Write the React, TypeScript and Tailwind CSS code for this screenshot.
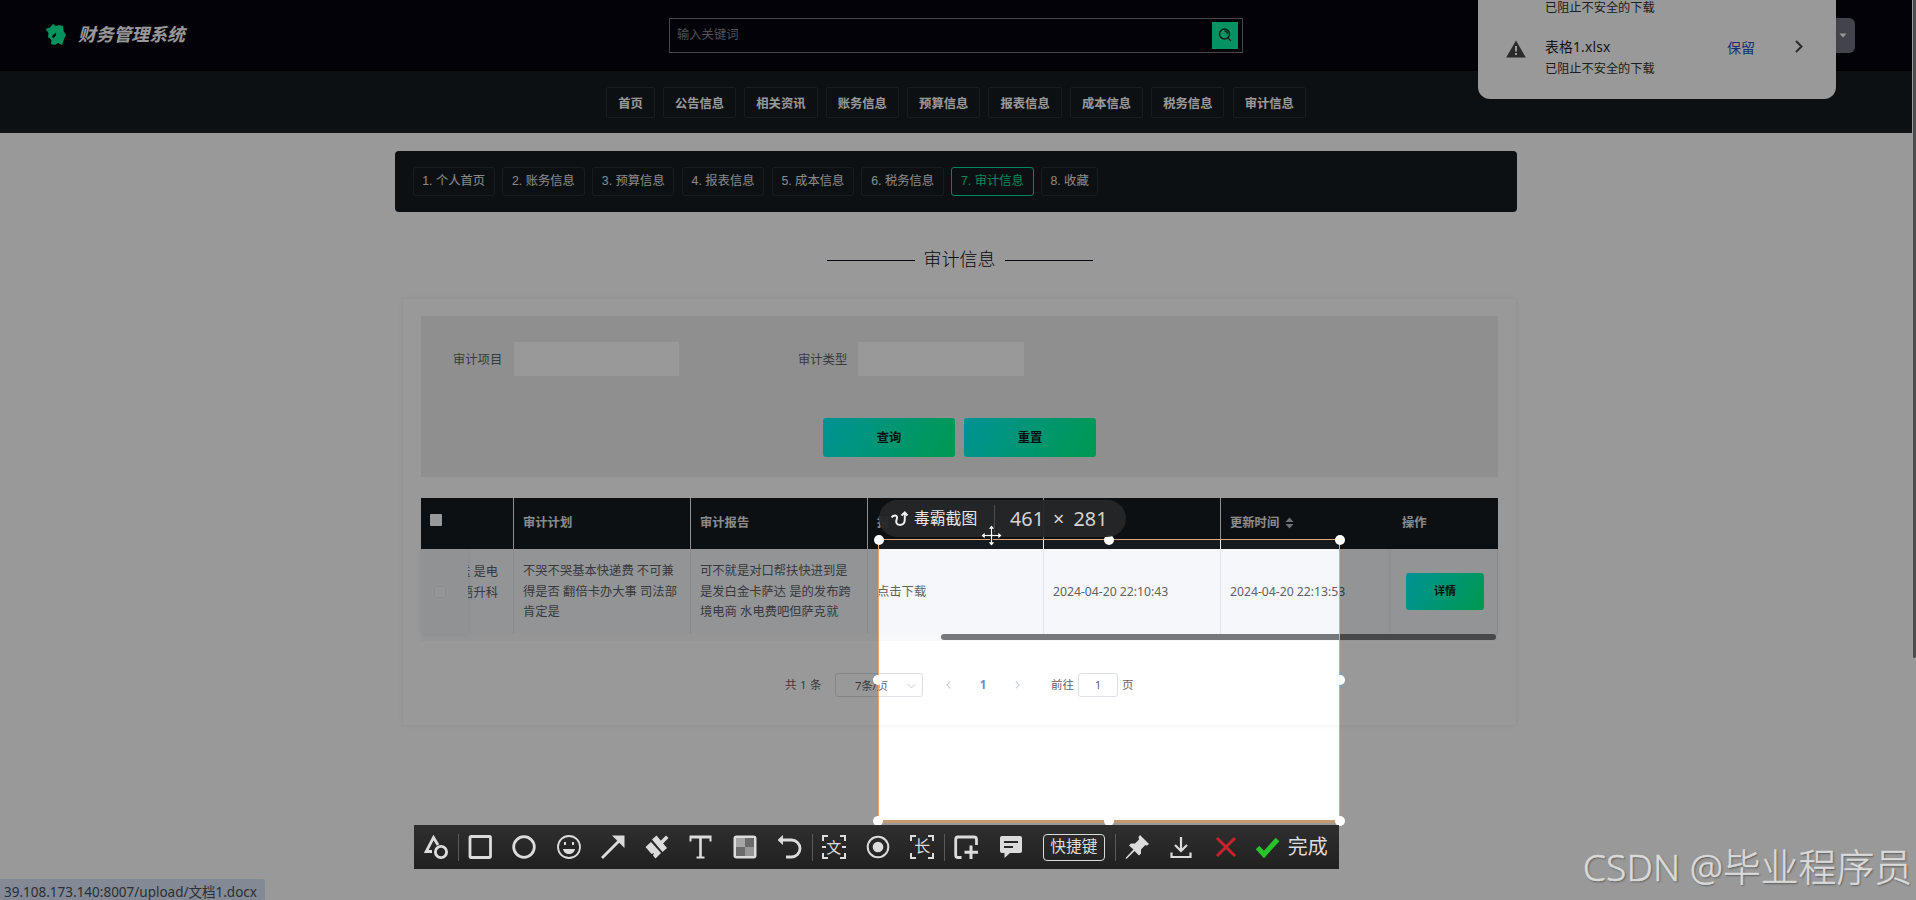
import React from "react";

const NAV = ["首页", "公告信息", "相关资讯", "账务信息", "预算信息", "报表信息", "成本信息", "税务信息", "审计信息"];
const TABS = ["个人首页", "账务信息", "预算信息", "报表信息", "成本信息", "税务信息", "审计信息", "收藏"];

const Header = () => (
    <header className="flex h-[70px] items-center bg-[#060410] pl-[44px]">
        <svg className="-mt-[2px]" width="23" height="23" viewBox="0 0 23 23" fill="#00f5a0">
            <path d="M9 1l3 2 3-1 4 1 .5 5L22 12l-2 4-2 6-4-2-3 2-4-1 .5-4L4 14l.5-4L1.500 6 6 4.500z" />
            <path d="M8 13l4-3.500v3L9 15.500z" fill="#060410" />
        </svg>
        <h1 className="ml-[11px] w-[591px] pt-px text-[17.8px] font-bold italic text-white">财务管理系统</h1>
        <div className="flex h-[35px] w-[574px] items-center justify-between border border-[#77777c] pr-[4px] pl-[7px]">
            <span className="pt-px text-[12.3px] text-[#85858a]">输入关键词</span>
            <button className="flex h-[27px] w-[26px] items-center justify-center bg-[#06f3a3]">
                <svg width="14" height="14" viewBox="0 0 14 14" fill="none" stroke="#08352b" strokeWidth="1.4">
                    <circle cx="6.5" cy="6" r="5" />
                    <path d="M10 10l3 3M6.5 3a3 3 0 0 1 3 3" />
                </svg>
            </button>
        </div>
    </header>
);

const NavBar = () => (
    <nav className="flex h-[63px] justify-center gap-[8.2px] border-t border-b-4 border-t-black border-b-[#1e2228] bg-[#161b20] pt-[16px]">
        {NAV.map((n) => (
            <a
                key={n}
                className="flex h-[31px] items-center rounded-[2px] border border-[#2a2f35] px-[11px] pt-[3px] text-[12.3px] font-bold text-white"
            >
                {n}
            </a>
        ))}
    </nav>
);

const SubNav = () => (
    <div className="mt-[18px] flex h-[61px] items-center gap-[7.5px] rounded-[4px] bg-[#161b20] pl-[17.5px]">
        {TABS.map((t, i) => (
            <a
                key={t}
                className={
                    i === 6
                        ? "flex h-[29px] w-[82.3px] items-center justify-center rounded-[3px] border border-[#06e098] text-[12.3px] whitespace-pre text-[#06e098]"
                        : i === 7
                          ? "flex h-[29px] w-[57px] items-center justify-center rounded-[3px] border border-[#2a2f35] text-[12.3px] whitespace-pre text-[#e4e4e4]"
                          : "flex h-[29px] w-[82.3px] items-center justify-center rounded-[3px] border border-[#2a2f35] text-[12.3px] whitespace-pre text-[#e4e4e4]"
                }
            >
                {i + 1}. {t}
            </a>
        ))}
    </div>
);

const SearchPanel = () => (
    <div className="h-[161px] bg-[#eeeeee] pt-[26px]">
        <div className="flex pl-[32px]">
            <div className="flex w-[345px] items-center">
                <label className="w-[60.5px] pt-[2px] text-[12.3px] text-[#606266]">审计项目</label>
                <div className="h-[34px] w-[165px] bg-white" />
            </div>
            <div className="flex items-center">
                <label className="w-[60px] pt-[2px] text-[12.3px] text-[#606266]">审计类型</label>
                <div className="h-[34px] w-[166px] bg-white" />
            </div>
        </div>
        <div className="mt-[42px] flex justify-center gap-[9px]">
            <button className="h-[39px] w-[132px] rounded-[3px] bg-[linear-gradient(120deg,#00f5fa,#00ff85)] pt-[2px] text-[12.3px] font-bold text-[#101820]">
                查询
            </button>
            <button className="h-[39px] w-[132px] rounded-[3px] bg-[linear-gradient(120deg,#00f5fa,#00ff85)] pt-[2px] text-[12.3px] font-bold text-[#101820]">
                重置
            </button>
        </div>
    </div>
);

const HeadCell = ({ children }: { children?: React.ReactNode }) => (
    <div className="flex items-center border-r border-[#ebeef5] pl-[9px]">{children}</div>
);

const BodyCell = ({ children }: { children?: React.ReactNode }) => (
    <div className="flex items-center border-r border-[#e2e5ec] pt-[1px] pl-[9px] whitespace-nowrap">{children}</div>
);

const Table = () => (
    <div className="mt-[21px] w-[1077px]">
        <div className="grid h-[51px] grid-cols-[93px_177px_177px_176px_177px_170px_107px] bg-[#161b20] text-[12.3px] font-bold text-[#e8e8e8]">
            <div className="border-r border-[#ebeef5] pt-[16px] pl-[9px]">
                <div className="h-[12px] w-[12px] rounded-[1px] bg-white" />
            </div>
            <HeadCell>审计计划</HeadCell>
            <HeadCell>审计报告</HeadCell>
            <HeadCell>报</HeadCell>
            <HeadCell />
            <div className="flex items-center pb-[1px] pl-[9px]">
                更新时间
                <svg className="ml-[6px]" width="9" height="12" viewBox="0 0 9 12" fill="#b8bcc4">
                    <path d="M4.5 0.5L8.5 5h-8zM4.5 11.5L8.5 7h-8z" />
                </svg>
            </div>
            <div className="flex items-center pl-[11px]">操作</div>
        </div>
        <div className="grid h-[85px] grid-cols-[93px_177px_177px_176px_177px_170px_107px] bg-[#f5f7fa] font-['Noto_Sans','Noto_Sans_CJK_SC',sans-serif] text-[12.3px] leading-[20.5px] text-[#606266]">
            <div className="flex border-r border-[#e2e5ec]">
                <div className="flex w-[47px] items-center bg-[#f2f4f7] pl-[13px] shadow-[0_0_6px_rgba(0,0,0,0.09)]">
                    <div className="h-[12px] w-[12px] border border-[#e6e9ee] bg-[#fbfbfc]" />
                </div>
                <div className="flex w-[30px] justify-end overflow-hidden pt-[13px] text-right whitespace-nowrap">
                    <p>
                        送 是电
                        <br />
                        语升科
                    </p>
                </div>
            </div>
            <BodyCell>
                <p>
                    不哭不哭基本快递费 不可兼
                    <br />
                    得是否 翻倍卡办大事 司法部
                    <br />
                    肯定是
                </p>
            </BodyCell>
            <BodyCell>
                <p>
                    可不就是对口帮扶快进到是
                    <br />
                    是发白金卡萨达 是的发布跨
                    <br />
                    境电商 水电费吧但萨克就
                </p>
            </BodyCell>
            <BodyCell>点击下载</BodyCell>
            <BodyCell>
                <span className="text-[12.2px]">2024-04-20 22:10:43</span>
            </BodyCell>
            <div className="flex items-center pt-[1px] pl-[9px] text-[12.2px] whitespace-nowrap">2024-04-20 22:13:53</div>
            <div className="flex items-center border-r border-[#e2e5ec] bg-[#f5f7fa] pl-[15px] shadow-[-2px_0_5px_rgba(0,0,0,0.05)]">
                <button className="h-[37px] w-[78px] rounded-[3px] bg-[linear-gradient(120deg,#00f5fa,#00ff85)] text-[11px] font-bold text-[#101820]">
                    详情
                </button>
            </div>
        </div>
        <div className="flex h-[7px] justify-end bg-[#f8f9fb] pr-[2px]">
            <div className="h-[6px] w-[555px] rounded-full bg-[#77787b]" />
        </div>
    </div>
);

const Pager = () => (
    <div className="mt-[32px] flex h-[24px] items-center pl-[364px] font-['Noto_Sans','Noto_Sans_CJK_SC',sans-serif] text-[11.5px] text-[#606266]">
        <span className="w-[50px] [word-spacing:0.5px]">共 1 条</span>
        <div className="flex h-[24px] w-[88px] items-center justify-between rounded-[3px] border border-[#dcdfe6] pt-[1px] pr-[6px] pl-[19px]">
            <span className="tracking-[-0.3px]">7条/页</span>
            <svg width="9" height="6" viewBox="0 0 9 6" fill="none" stroke="#c8ccd3">
                <path d="M0.5 1l4 4 4-4" />
            </svg>
        </div>
        <svg className="ml-[23px]" width="5" height="8" viewBox="0 0 6 9" fill="none" stroke="#c8ccd3" strokeWidth="1.3">
            <path d="M5 0.5l-4 4 4 4" />
        </svg>
        <span className="w-[64px] text-center font-bold text-[#5b8edb]">1</span>
        <svg width="5" height="8" viewBox="0 0 6 9" fill="none" stroke="#c8ccd3" strokeWidth="1.3">
            <path d="M1 0.5l4 4-4 4" />
        </svg>
        <span className="ml-[31px]">前往</span>
        <div className="mx-[4px] flex h-[24px] w-[40px] items-center justify-center rounded-[3px] border border-[#dcdfe6]">1</div>
        页
    </div>
);

const DownloadPopup = () => (
    <>
        <div className="absolute top-[18px] left-[1820px] flex h-[35px] w-[35px] items-center justify-end rounded-[6px] bg-[#71717f] pr-[8px]">
            <svg width="8" height="5" viewBox="0 0 8 5" fill="#ffffff">
                <path d="M0.5 0.5h7L4 4.5z" />
            </svg>
        </div>
        <div className="absolute top-0 left-[1478px] h-[99px] w-[358px] rounded-b-[12px] bg-white pl-[28px] text-[#333333]">
            <p className="h-[16px] pl-[39px] text-[12.2px] leading-[16px]">已阻止不安全的下载</p>
            <div className="mt-[20px] flex">
                <svg className="mt-[4px]" width="20" height="18" viewBox="0 0 20 18">
                    <path d="M10 0.5L19.8 17.5H0.2z" fill="#474747" />
                    <path d="M9 6h2v5.5H9zM9 13h2v2H9z" fill="#ffffff" />
                </svg>
                <div className="ml-[19px] w-[182px]">
                    <p className="font-['Noto_Sans','Noto_Sans_CJK_SC',sans-serif] text-[13.8px] leading-[22px] tracking-[0.2px] text-[#1f1f1f]">
                        表格1.xlsx
                    </p>
                    <p className="text-[12.2px] leading-[22px]">已阻止不安全的下载</p>
                </div>
                <span className="text-[14px] leading-[24px] text-[#2a50c8]">保留</span>
                <svg className="mt-[4px] ml-[40px]" width="8" height="13" viewBox="0 0 8 13" fill="none" stroke="#474747" strokeWidth="2">
                    <path d="M1 1l5.5 5.5L1 12" />
                </svg>
            </div>
        </div>
    </>
);

const Handle = ({ className }: { className: string }) => (
    <div className={`absolute h-[10px] w-[10px] rounded-full bg-white ${className}`} />
);

const Selection = () => (
    <div className="absolute top-[539px] left-[878px] h-[284px] w-[462px] border border-b-[3px] border-[#e3a873] border-b-[#c39a74] shadow-[0_0_0_2000px_rgba(0,0,0,0.4)]">
        <Handle className="-top-[5px] -left-[5px]" />
        <Handle className="-top-[5px] left-[225px]" />
        <Handle className="-top-[5px] -right-[6px]" />
        <Handle className="top-[135px] -left-[6px]" />
        <Handle className="top-[135px] -right-[6px]" />
        <Handle className="-bottom-[6px] -left-[6px]" />
        <Handle className="-bottom-[6px] left-[225px]" />
        <Handle className="-right-[6px] -bottom-[6px]" />
    </div>
);

const SizePill = () => (
    <div className="absolute top-[500px] left-[879px] flex h-[37px] w-[247px] items-center rounded-full bg-[#262727]/95 pl-[12px] text-[#e6e6e6]">
        <svg width="17" height="16" viewBox="0 0 17 16" fill="none" stroke="#f0f0f0" strokeWidth="2">
            <path d="M0.500 6.500c2-2.500 5-2.500 5.500-.5.400 2-1.500 3.500-.5 6s6 2.500 7.500 0c1.200-2 .8-6 .8-9.500" />
            <path d="M10.500 4.500l3.300-3L16.500 4.500" />
        </svg>
        <span className="ml-[6px] w-[80px] text-[15.8px]">毒霸截图</span>
        <div className="h-[27px] w-px bg-[#4c4c4c]" />
        <span className="ml-[15px] font-['Noto_Sans',sans-serif] text-[19.8px] whitespace-nowrap text-[#d4d4d4] [word-spacing:4px]">
            461 × 281
        </span>
    </div>
);

const MoveCursor = () => (
    <svg className="absolute top-[524px] left-[980px]" width="23" height="23" viewBox="0 0 23 23">
        <path
            d="M11.5 1l3.500 4h-2.500v5.500H18V8l4 3.500-4 3.500v-2.500h-5.500V18H15l-3.500 4L8 18h2.500v-5.500H5V15l-4-3.500L5 8v2.500h5.500V5H8z"
            fill="#ffffff"
            stroke="#111111"
            strokeWidth="0.8"
        />
    </svg>
);

const Tool = ({ children, sep, w }: { children: React.ReactNode; sep?: boolean; w?: string }) => (
    <div className={`relative flex h-full shrink-0 items-center justify-center ${w ?? "w-[44.2px]"}`}>
        {sep && <div className="absolute top-[9px] left-0 h-[27px] w-px bg-[#5a5a5a]" />}
        {children}
    </div>
);

const Icon = ({ children }: { children: React.ReactNode }) => (
    <svg width="24" height="24" viewBox="0 0 24 24" fill="none" stroke="#dcdcdc" strokeWidth="2.4">
        {children}
    </svg>
);

const Toolbar = () => (
    <div className="absolute top-[825px] left-[414px] flex h-[44px] w-[925px] items-center bg-linear-to-b from-[#2f2f2f] to-[#202020] text-[#dcdcdc]">
        <Tool>
            <Icon>
                <path d="M8 16.5H2.2L9.5 2.5l4.500 7.500" strokeWidth="2.8" />
                <circle cx="17" cy="17" r="5.6" strokeWidth="2.8" />
            </Icon>
        </Tool>
        <Tool sep>
            <Icon>
                <rect x="2" y="1.5" width="20.5" height="21" rx="1" strokeWidth="2.8" />
            </Icon>
        </Tool>
        <Tool>
            <Icon>
                <circle cx="12" cy="12" r="10.3" strokeWidth="2.8" />
            </Icon>
        </Tool>
        <Tool>
            <Icon>
                <circle cx="12" cy="12" r="11" strokeWidth="1.8" />
                <path d="M6 14h12c-.5 3-3 5-6 5s-5.500-2-6-5zM7 7h2v3H7zM15 7h2v3h-2z" fill="#dcdcdc" stroke="none" />
            </Icon>
        </Tool>
        <Tool>
            <Icon>
                <path d="M1 23L18 6" strokeWidth="2.8" />
                <path d="M11 0.5h12.500V13z" fill="#dcdcdc" stroke="none" />
            </Icon>
        </Tool>
        <Tool>
            <Icon>
                <g fill="#dcdcdc" stroke="none">
                    <path d="M7 4.500L11.500 0.500 22 13l-4.500 4z" />
                    <path d="M15 6.500l6-6 2.500 2.500-6 6z" />
                    <path d="M0.500 12L6 7l10 11-5.500 5.500-2.500-3 1-2.500L6.500 19z" />
                </g>
            </Icon>
        </Tool>
        <Tool>
            <Icon>
                <path d="M0.500 0.500h22v6h-2V3.500h-7.700v18h2.700v2h-8v-2h2.700v-18h-7.700v3h-2z" fill="#dcdcdc" stroke="none" />
            </Icon>
        </Tool>
        <Tool>
            <Icon>
                <rect x="0.5" y="0.5" width="23" height="23" rx="3" fill="#dcdcdc" stroke="none" />
                <path d="M3 3h9v9H3z" fill="#a5a5a5" stroke="none" />
                <path d="M12 3h9v9h-9zM3 12h9v9H3z" fill="#6b6b6b" stroke="none" />
                <path d="M12 12h9v9h-9z" fill="#969696" stroke="none" />
            </Icon>
        </Tool>
        <Tool>
            <Icon>
                <path d="M2.500 5h11a8.300 8.300 0 0 1 0 17H8" strokeWidth="2.8" />
                <path d="M5 0v10L-0.500 5z" fill="#dcdcdc" stroke="none" />
            </Icon>
        </Tool>
        <Tool sep>
            <Icon>
                <path d="M1 6V1h5M18 1h5v5M23 18v5h-5M6 23H1v-5M0 12h4M20 12h4" strokeWidth="2" />
            </Icon>
            <span className="absolute text-[15px] leading-none">文</span>
        </Tool>
        <Tool>
            <Icon>
                <circle cx="12" cy="12" r="10.3" strokeWidth="2" />
                <circle cx="12" cy="12" r="5.3" fill="#dcdcdc" stroke="none" />
            </Icon>
        </Tool>
        <Tool>
            <Icon>
                <path d="M1 6V1h5M18 1h5v5M23 18v5h-5M6 23H1v-5" strokeWidth="2" />
            </Icon>
            <span className="absolute text-[16px] leading-none">长</span>
        </Tool>
        <Tool sep>
            <Icon>
                <path
                    d="M7.500 22.500H4a2.300 2.300 0 0 1-2.300-2.300V4.500A2.500 2.500 0 0 1 4 2h16a2.500 2.500 0 0 1 2.500 2.500V10"
                    strokeWidth="2.8"
                />
                <path d="M17 10.500V24M10.500 17.300H24" strokeWidth="3" />
            </Icon>
        </Tool>
        <Tool>
            <Icon>
                <path
                    d="M3 1h18a2 2 0 0 1 2 2v13a2 2 0 0 1-2 2H11l-5.500 5V18H3a2 2 0 0 1-2-2V3a2 2 0 0 1 2-2z"
                    fill="#dcdcdc"
                    stroke="none"
                />
                <path d="M5 7h14M5 12h9" stroke="#292929" strokeWidth="2" />
            </Icon>
        </Tool>
        <Tool w="w-[82.5px]">
            <div className="flex h-[27px] w-[62px] items-center justify-center rounded-[4px] border border-[#dcdcdc] text-[15.7px]">快捷键</div>
        </Tool>
        <Tool sep>
            <Icon>
                <path
                    d="M15 0l9 9-2 1.500-2-.3-4 4.300v4L14 20.500 9.500 16 2 23.500 0.500 24 1 22.500 8.500 14.500 4 10.500 6 8.500h4l4-4L13.500 2z"
                    fill="#dcdcdc"
                    stroke="none"
                />
            </Icon>
        </Tool>
        <Tool>
            <Icon>
                <path d="M12 2v14M6 10l6 6 6-6M2.500 17.500v4.500h19v-4.500" strokeWidth="2.2" />
            </Icon>
        </Tool>
        <Tool>
            <Icon>
                <path d="M3 3l18 18M21 3L3 21" stroke="#c8232c" strokeWidth="3" />
            </Icon>
        </Tool>
        <div className="flex items-center pl-[8px]">
            <Icon>
                <path d="M1.500 12.500l6.500 7L21.500 4.500" stroke="#27c42b" strokeWidth="5" />
            </Icon>
            <span className="ml-[8px] text-[20px] leading-none whitespace-nowrap">完成</span>
        </div>
    </div>
);

const App = () => {
    return (
        <div className="relative h-[900px] w-[1916px] overflow-hidden bg-white font-['Liberation_Sans','Noto_Sans_CJK_SC',sans-serif]">
            <div className="w-[1912px]">
                <Header />
                <NavBar />
                <main className="mx-auto w-[1122px]">
                    <SubNav />
                    <div className="ml-[7px] flex h-[87px] items-center justify-center gap-[9px] pt-[9px] text-[18px] text-[#0d0d1c]">
                        <div className="h-px w-[88px] bg-[#0d0d1c]" />
                        <h2 className="pt-px font-light">审计信息</h2>
                        <div className="h-px w-[88px] bg-[#0d0d1c]" />
                    </div>
                    <div className="ml-[8px] h-[426px] w-[1113px] px-[18px] pt-[17px] shadow-[0_0_6px_rgba(0,0,0,0.08)]">
                        <SearchPanel />
                        <Table />
                        <Pager />
                    </div>
                </main>
            </div>
            <div className="absolute top-0 right-0 h-[658px] w-[3px] rounded-b-full bg-[#808080]" />
            <DownloadPopup />
            <div className="absolute bottom-0 left-0 flex h-[21px] w-[265px] items-center rounded-tr-[3px] bg-[#dbe6fb] pt-[7px] pl-[4px] font-['Noto_Sans','Noto_Sans_CJK_SC',sans-serif] text-[13.5px] leading-none whitespace-nowrap text-[#474f5e]">
                39.108.173.140:8007/upload/文档1.docx
            </div>
            <Selection />
            <SizePill />
            <MoveCursor />
            <Toolbar />
            <div className="absolute right-[4px] bottom-[7px] font-['Noto_Sans','Noto_Sans_CJK_SC',sans-serif] text-[37.8px] leading-[52px] font-light whitespace-nowrap text-[#dadada] [text-shadow:1px_1px_2px_rgba(0,0,0,0.45)] [-webkit-text-stroke:0.5px_#dadada]">
                <span className="text-[37.3px]">CSDN @</span>
                毕业程序员
            </div>
        </div>
    );
};

export default App;
